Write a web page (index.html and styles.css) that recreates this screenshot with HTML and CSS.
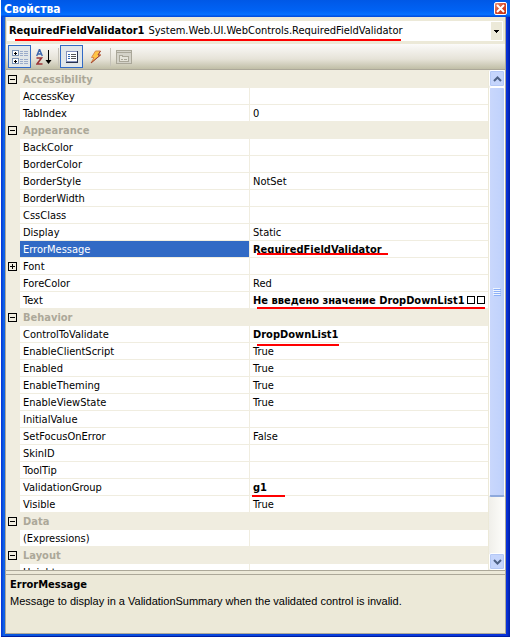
FILE: index.html
```html
<!DOCTYPE html>
<html lang="ru">
<head>
<meta charset="utf-8">
<title>Свойства</title>
<link rel="stylesheet" href="styles.css">
</head>
<body>
<main class="window">
  <header class="titlebar">
    <h1>Свойства</h1>
    <button class="close" aria-label="Закрыть"><svg width="9" height="9" viewBox="0 0 9 9"><path d="M1 1l7 7M8 1l-7 7" stroke="#fff" stroke-width="2"/></svg></button>
  </header>
  <div class="frame">
    <div class="picker">
      <button class="object" aria-label="Объект"><span class="mark mark-object"><b>RequiredFieldValidator1</b><span>System.Web.UI.WebControls.RequiredFieldValidator</span></span><span class="drop"><svg width="5" height="3" viewBox="0 0 5 3" shape-rendering="crispEdges"><path d="M0 0h5v1h-1v1h-1v1h-1v-1h-1v-1h-1z"/></svg></span></button>
    </div>
    <div class="toolbar">
      <button class="tool on" aria-label="Categorized"><svg width="16" height="16" viewBox="0 0 16 16" shape-rendering="crispEdges"><path d="M.5 1.500h6v5h-6zM.5 9.500h6v5h-6z" fill="#fff" stroke="#7b93b5"/><path d="M2 4h3M3.500 2.500v3M2 12h3M3.500 10.500v3" stroke="#000"/><path d="M8 2.500h3M12 2.500h4M8 4.500h3M12 4.500h4M8 6.500h3M12 6.500h4M8 10.500h3M12 10.500h4M8 12.500h3M12 12.500h4M8 14.500h3M12 14.500h4" stroke="#9aabca"/></svg></button>
      <button class="tool" aria-label="Alphabetical"><svg width="16" height="16" viewBox="0 0 16 16"><path d="M.7 7L3.300 .7h.4L6.300 7M2 5h3" fill="none" stroke="#3c66ad" stroke-width="1.400"/><path d="M.5 9h5L1 15h5.500" fill="none" stroke="#9a3437" stroke-width="1.600"/><path d="M12 1h1v10h2.500l-3 4-3-4H12z" fill="#000"/></svg></button>
      <span class="sep"></span>
      <button class="tool on" aria-label="Properties"><svg width="16" height="16" viewBox="0 0 16 16" shape-rendering="crispEdges"><path d="M2.500 2.500h11v10h-11z" fill="#fff" stroke="#8592bd"/><path d="M13.500 2v11.500H2" fill="none" stroke="#28324f"/><path d="M4 5.500h2M4 7.500h2M4 9.500h2" stroke="#3165b5"/><path d="M7 5.500h5M7 7.500h5M7 9.500h5" stroke="#555"/></svg></button>
      <button class="tool" aria-label="Events"><svg width="16" height="16" viewBox="0 0 16 16"><path d="M7.500 2h5L10 6h2.500L3 14l3-5.500H3.500z" fill="#ffc545" stroke="#d98a4a"/><path d="M12.500 2L10 6h2.500L3 14" fill="none" stroke="#9c4038"/></svg></button>
      <span class="sep"></span>
      <button class="tool" disabled aria-label="Property Pages"><svg width="16" height="16" viewBox="0 0 16 16" shape-rendering="crispEdges"><path d="M.5 1.500h15v13H.5z" fill="#d4d2c8" stroke="#aaa799"/><path d="M1 3h14" stroke="#aaa799"/><path d="M3.500 7.500v-1h3v1h6v5h-9z" fill="#e6e4da" stroke="#aaa799"/><path d="M5 10h2M8 10h3" stroke="#aaa799"/></svg></button>
    </div>
    <div class="grid-area">
      <table class="grid">
        <colgroup><col class="c-toggle"><col class="c-name"><col></colgroup>
        <tbody>
        <tr class="cat"><td><button class="box" aria-label="Свернуть"></button></td><th colspan="2">Accessibility</th></tr>
        <tr><td></td><th>AccessKey</th><td></td></tr>
        <tr><td></td><th>TabIndex</th><td>0</td></tr>
        <tr class="cat"><td><button class="box" aria-label="Свернуть"></button></td><th colspan="2">Appearance</th></tr>
        <tr><td></td><th>BackColor</th><td></td></tr>
        <tr><td></td><th>BorderColor</th><td></td></tr>
        <tr><td></td><th>BorderStyle</th><td>NotSet</td></tr>
        <tr><td></td><th>BorderWidth</th><td></td></tr>
        <tr><td></td><th>CssClass</th><td></td></tr>
        <tr><td></td><th>Display</th><td>Static</td></tr>
        <tr class="sel"><td></td><th>ErrorMessage</th><td><b class="mark mark-error">RequiredFieldValidator</b></td></tr>
        <tr><td><button class="box plus" aria-label="Развернуть"></button></td><th>Font</th><td></td></tr>
        <tr><td></td><th>ForeColor</th><td>Red</td></tr>
        <tr><td></td><th>Text</th><td><b class="mark mark-text">Не введено значение DropDownList1<i class="tofu"></i><i class="tofu"></i></b></td></tr>
        <tr class="cat"><td><button class="box" aria-label="Свернуть"></button></td><th colspan="2">Behavior</th></tr>
        <tr><td></td><th>ControlToValidate</th><td><b class="mark mark-control">DropDownList1</b></td></tr>
        <tr><td></td><th>EnableClientScript</th><td>True</td></tr>
        <tr><td></td><th>Enabled</th><td>True</td></tr>
        <tr><td></td><th>EnableTheming</th><td>True</td></tr>
        <tr><td></td><th>EnableViewState</th><td>True</td></tr>
        <tr><td></td><th>InitialValue</th><td></td></tr>
        <tr><td></td><th>SetFocusOnError</th><td>False</td></tr>
        <tr><td></td><th>SkinID</th><td></td></tr>
        <tr><td></td><th>ToolTip</th><td></td></tr>
        <tr><td></td><th>ValidationGroup</th><td><b class="mark mark-group">g1</b></td></tr>
        <tr><td></td><th>Visible</th><td>True</td></tr>
        <tr class="cat"><td><button class="box" aria-label="Свернуть"></button></td><th colspan="2">Data</th></tr>
        <tr><td></td><th>(Expressions)</th><td></td></tr>
        <tr class="cat"><td><button class="box" aria-label="Свернуть"></button></td><th colspan="2">Layout</th></tr>
        <tr><td></td><th>Height</th><td></td></tr>
        </tbody>
      </table>
      <div class="scroll">
        <button class="arrow" aria-label="Вверх"><svg width="9" height="6" viewBox="0 0 9 6"><path d="M1 5l3.500-3.500L8 5" fill="none" stroke="#4d6185" stroke-width="2"/></svg></button>
        <div class="thumb"><svg width="8" height="8" viewBox="0 0 8 8" shape-rendering="crispEdges"><path d="M0 .5h7M0 2.500h7M0 4.500h7M0 6.500h7" stroke="#eef4fe"/><path d="M1 1.500h7M1 3.500h7M1 5.500h7M1 7.500h7" stroke="#8cb0f8"/></svg></div>
        <button class="arrow down" aria-label="Вниз"><svg width="9" height="6" viewBox="0 0 9 6"><path d="M1 1l3.500 3.500L8 1" fill="none" stroke="#4d6185" stroke-width="2"/></svg></button>
      </div>
    </div>
    <div class="splitter"></div>
    <section class="help">
      <h2>ErrorMessage</h2>
      <p>Message to display in a ValidationSummary when the validated control is invalid.</p>
    </section>
  </div>
</main>
</body>
</html>
```
FILE: styles.css
```css
* { box-sizing: border-box; }
body { margin: 0; background: #fff; color: #000; font: 11px/14px "DejaVu Sans Condensed", "DejaVu Sans", sans-serif; }
button { font: inherit; color: inherit; border: 0; padding: 0; margin: 0; background: none; }
svg { display: block; }
h1, h2, p { margin: 0; font-size: inherit; }
.window { margin-left: 1px; height: 100vh; display: flex; flex-direction: column; background: linear-gradient(90deg, #0831d9, #0855dd 2px, #166aee 3px, #0855dd 4px, #0831d9 calc(100% - 3px), #001ea0); padding: 0 4px 2px; border-bottom: 1px solid #001ea0; }
.titlebar { height: 17px; margin: 0 -4px; padding: 0 3px; display: flex; align-items: center; justify-content: space-between; background: linear-gradient(#0058e6, #0062f4 60%, #0570ff 85%, #0048d8); color: #fff; }
.titlebar h1 { font-size: 12px; }
.close { width: 13px; height: 13px; display: grid; place-items: center; border: 1px solid #fff; border-radius: 2px; background: linear-gradient(135deg, #e9967c, #d6492b 50%, #c03010); }
.frame { flex: 1; min-height: 0; display: flex; flex-direction: column; background: #ece9d8; border: 1px solid #aca899; border-top: 0; }
.picker { padding: 4px 2px 3px 1px; }
.object { width: 100%; height: 20px; display: flex; align-items: center; justify-content: space-between; background: #fff; padding: 0 1px 0 2px; white-space: nowrap; }
.object b { margin-right: 4px; }
.drop { width: 11px; height: 18px; display: grid; place-items: center; background: #ece9d8; }
.toolbar { height: 26px; display: flex; align-items: center; gap: 1px; padding: 0 2px; background: linear-gradient(#fbfaf9, #e6e3d8 60%, #c0bea6); border-bottom: 1px solid #aca899; }
.tool { width: 23px; height: 23px; display: grid; place-items: center; }
.tool.on { background: #e1e6e8; border: 1px solid #316ac5; }
.sep { width: 1px; height: 18px; margin-left: 2px; background: #c5c2b8; }
.grid-area { flex: 1; min-height: 0; display: flex; overflow: hidden; background: #f0ede0; }
.grid { flex: 1; min-width: 0; align-self: flex-start; margin-top: 1px; table-layout: fixed; border-collapse: separate; border-spacing: 0; border-right: 1px solid #ece9d8; }
.c-toggle { width: 14px; }
.c-name { width: 229px; }
.grid tr { height: 17px; background: #fff; }
.grid td, .grid th { height: 17px; padding: 2px 0 0 3px; text-align: left; font-weight: 400; white-space: nowrap; border-bottom: 1px solid #f0ede0; }
.grid td:first-child { padding: 0 0 0 2px; background: #f0ede0; }
.grid td:last-child { border-left: 1px solid #f0ede0; }
.grid .cat { background: #f0ede0; }
.grid .cat th { font-weight: 700; color: #aca899; }
.grid .sel th { background: #316ac5; color: #fff; }
.box { display: block; width: 9px; height: 9px; border: 1px solid #000; background: linear-gradient(#000, #000) center / 5px 1px no-repeat; }
.box.plus { background: linear-gradient(#000, #000) center / 5px 1px no-repeat, linear-gradient(#000, #000) center / 1px 5px no-repeat; }
.tofu { display: inline-block; width: 8px; height: 8px; border: 1px solid #000; margin-left: 2px; }
.mark { position: relative; }
.mark::after { content: ""; position: absolute; height: 2px; background: #f00; }
.mark-object::after { left: 6px; right: 2px; bottom: -3px; }
.mark-error::after { left: 4px; width: 131px; bottom: 1px; }
.mark-text::after { left: 4px; width: 228px; bottom: -2px; }
.mark-control::after { left: 4px; width: 82px; bottom: -5px; }
.mark-group::after { left: -1px; width: 33px; bottom: -3px; }
.scroll { width: 16px; display: flex; flex-direction: column; background: linear-gradient(90deg, #f0efea, #fefefb); }
.arrow { flex: none; height: 17px; display: grid; place-items: center; border: 1px solid #fff; border-radius: 2px; background: #c5d5fc; box-shadow: inset 0 0 0 1px #b4c8f6; }
.thumb { flex: 0 1 410px; display: grid; place-items: center; background: linear-gradient(90deg, #c9d7fc, #c2d3fc 70%, #b7cbf8); border: 1px solid #fff; border-bottom: 2px solid #8ea9dc; border-radius: 2px; }
.down { margin-top: auto; }
.splitter { height: 5px; border: solid #aca899; border-width: 1px 0; }
.help { height: 58px; padding: 2px 4px; line-height: 16px; }
.help p { font-family: "Liberation Sans", Arial, sans-serif; }
```
